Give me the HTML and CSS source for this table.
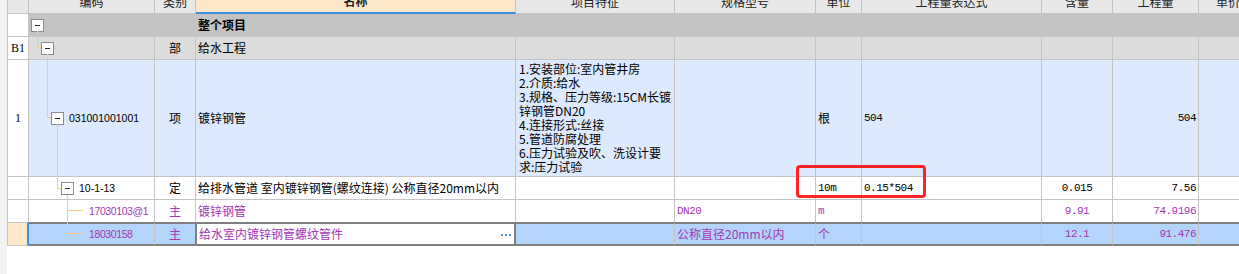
FILE: index.html
```html
<!DOCTYPE html>
<html lang="zh">
<head>
<meta charset="utf-8">
<title>清单</title>
<link rel="stylesheet" href="styles.css">
</head>
<body>
<div class="page">
  <div class="strip"></div>
  <div class="table">
    <div class="row head">
      <div class="c rn"></div>
      <div class="c">编码</div>
      <div class="c">类别</div>
      <div class="c name">名称</div>
      <div class="c">项目特征</div>
      <div class="c">规格型号</div>
      <div class="c">单位</div>
      <div class="c">工程量表达式</div>
      <div class="c">含量</div>
      <div class="c">工程量</div>
      <div class="c">单价</div>
    </div>

    <div class="row lv0">
      <div class="c rn"></div>
      <div class="c code i0"><span class="tb"></span></div>
      <div class="c ctr"></div>
      <div class="c bold">整个项目</div>
      <div class="c"></div>
      <div class="c"></div>
      <div class="c"></div>
      <div class="c"></div>
      <div class="c"></div>
      <div class="c"></div>
      <div class="c"></div>
    </div>

    <div class="row lv1">
      <div class="c rn">B1</div>
      <div class="c code i1"><span class="tb"></span></div>
      <div class="c ctr">部</div>
      <div class="c">给水工程</div>
      <div class="c"></div>
      <div class="c"></div>
      <div class="c"></div>
      <div class="c"></div>
      <div class="c"></div>
      <div class="c"></div>
      <div class="c"></div>
    </div>

    <div class="row lv2 tall">
      <div class="c rn">1</div>
      <div class="c code i2"><span class="tb"></span><span class="cd">031001001001</span></div>
      <div class="c ctr">项</div>
      <div class="c">镀锌钢管</div>
      <div class="c feat">1.安装部位:室内管井房<br>2.介质:给水<br>3.规格、压力等级:15CM长镀<br>锌钢管DN20<br>4.连接形式:丝接<br>5.管道防腐处理<br>6.压力试验及吹、洗设计要<br>求:压力试验</div>
      <div class="c"></div>
      <div class="c">根</div>
      <div class="c num">504</div>
      <div class="c num ctr"></div>
      <div class="c num rt">504</div>
      <div class="c"></div>
    </div>

    <div class="row">
      <div class="c rn"></div>
      <div class="c code i3"><span class="tb"></span><span class="cd">10-1-13</span></div>
      <div class="c ctr">定</div>
      <div class="c">给排水管道 室内镀锌钢管(螺纹连接) 公称直径20mm以内</div>
      <div class="c"></div>
      <div class="c"></div>
      <div class="c num">10m</div>
      <div class="c num">0.15*504</div>
      <div class="c num ctr">0.015</div>
      <div class="c num rt">7.56</div>
      <div class="c"></div>
    </div>

    <div class="row pre p">
      <div class="c rn"></div>
      <div class="c code leaf"><span class="cd">17030103@1</span></div>
      <div class="c ctr">主</div>
      <div class="c">镀锌钢管</div>
      <div class="c"></div>
      <div class="c num">DN20</div>
      <div class="c num">m</div>
      <div class="c num"></div>
      <div class="c num ctr">9.91</div>
      <div class="c num rt">74.9196</div>
      <div class="c"></div>
    </div>

    <div class="row sel p">
      <div class="c rn"></div>
      <div class="c code leaf"><span class="cd">18030158</span></div>
      <div class="c ctr kind">主</div>
      <div class="c edit"><span>给水室内镀锌钢管螺纹管件</span><span class="dots"><i></i><i></i><i></i></span></div>
      <div class="c"></div>
      <div class="c">公称直径20mm以内</div>
      <div class="c">个</div>
      <div class="c num"></div>
      <div class="c num ctr">12.1</div>
      <div class="c num rt">91.476</div>
      <div class="c"></div>
    </div>
  </div>

  <svg class="links" width="1239" height="274" viewBox="0 0 1239 274">
    <g fill="#fcc884">
      <rect x="37" y="31" width="1" height="17"/>
      <rect x="37" y="47" width="4" height="1"/>
      <rect x="47" y="54" width="1" height="64"/>
      <rect x="47" y="117" width="4" height="1"/>
      <rect x="57" y="124" width="1" height="65"/>
      <rect x="57" y="188" width="4" height="1"/>
      <rect x="67" y="195" width="1" height="39"/>
      <rect x="67" y="210" width="16" height="1"/>
      <rect x="67" y="233" width="16" height="1"/>
    </g>
  </svg>
  <div class="mark"></div>
</div>
</body>
</html>
```

FILE: styles.css
```css
body {
  margin: 0;
  background: #fff;
  overflow: hidden;
}

.page {
  position: relative;
  display: flex;
  width: 1239px;
  height: 274px;
  overflow: hidden;
  font-family: "Noto Sans CJK SC", sans-serif;
  font-size: 12px;
  color: #000;
}

.strip {
  flex: none;
  width: 7px;
  background: #f2f2f2;
}

.table {
  flex: none;
  margin-top: -10px;
  display: flex;
  flex-direction: column;
}

.row {
  display: grid;
  grid-template-columns: 22px 126px 41px 320px 159px 141px 46px 180px 71px 86px 59px;
  height: 23px;
}

.c {
  box-sizing: border-box;
  border-right: 1px solid #c4c4c4;
  border-bottom: 1px solid #c4c4c4;
  display: flex;
  align-items: center;
  padding: 0 2px;
  white-space: nowrap;
  overflow: hidden;
  line-height: 14px;
}

.rn {
  border-left: 1px solid #c4c4c4;
  justify-content: center;
  background: #fff;
  font-family: "Liberation Serif", "Noto Sans CJK SC", serif;
  font-size: 12px;
  color: #000;
}

.ctr { justify-content: center; }
.rt { justify-content: flex-end; }
.bold { font-weight: bold; }

/* header */
.head { height: 24px; }
.head .c {
  background: #e8e8e8;
  justify-content: center;
  color: #222;
}
.head .name {
  background: #fde7c9;
  border-bottom: 2px solid #3d8ee8;
  font-weight: bold;
}

/* row tints */
.lv0 .c:not(.rn) { background: #c3c3c3; }
.lv1 .c:not(.rn) { background: #dcdcdc; }
.lv2 .c:not(.rn) { background: #dde9fc; }

.tall { height: auto; }
.feat {
  padding: 2px 2px 2px 3px;
  display: block;
  line-height: 14px;
}

/* tree */
.code { padding-left: 2px; }
.i0 { padding-left: 2px; }
.i1 { padding-left: 12px; }
.i2 { padding-left: 22px; }
.i3 { padding-left: 32px; }
.leaf { padding-left: 60px; }
.leaf .cd { letter-spacing: -0.4px; }

.tb {
  flex: none;
  position: relative;
  box-sizing: border-box;
  width: 13px;
  height: 13px;
  border: 1px solid #8c8c8c;
  background: #fff;
  margin-right: 5px;
}
.tb::after {
  content: "";
  position: absolute;
  left: 3px;
  top: 5px;
  width: 5px;
  height: 1px;
  background: #222;
}

.cd {
  font-family: "Liberation Sans", "Noto Sans CJK SC", sans-serif;
  font-size: 10.5px;
}

.num {
  font-family: "Liberation Mono", "Noto Sans CJK SC", monospace;
  font-size: 11px;
  letter-spacing: -0.5px;
}

.p .c:not(.rn) { color: #a236b5; }

/* row before selection */
.pre { height: 22px; }
.pre .c { border-bottom: 0; }

/* selected row */
.sel { height: 24px; }
.sel .c {
  background: #b3d5fb;
  border-top: 2px solid #808080;
  border-bottom: 2px solid #808080;
}
.sel .rn {
  background: #fde8c9;
  border-top: 1px solid #c4c4c4;
  border-bottom: 1px solid #c4c4c4;
  border-right: 2px solid #3c8fe6;
}
.sel .kind { border-right: 1px solid #808080; }
.sel .edit {
  background: #fff;
  border-left: 1px solid #808080;
  border-right: 2px solid #808080;
  justify-content: space-between;
  padding-right: 3px;
}

.dots {
  display: flex;
  gap: 2px;
  padding-top: 2px;
}
.dots i {
  width: 2px;
  height: 2px;
  background: #5b8fd0;
}

.links {
  position: absolute;
  left: 0;
  top: 0;
  pointer-events: none;
}

.mark {
  position: absolute;
  left: 796px;
  top: 165px;
  width: 130px;
  height: 33px;
  box-sizing: border-box;
  border: 3px solid #ff2424;
  border-radius: 4px;
  pointer-events: none;
}
```
